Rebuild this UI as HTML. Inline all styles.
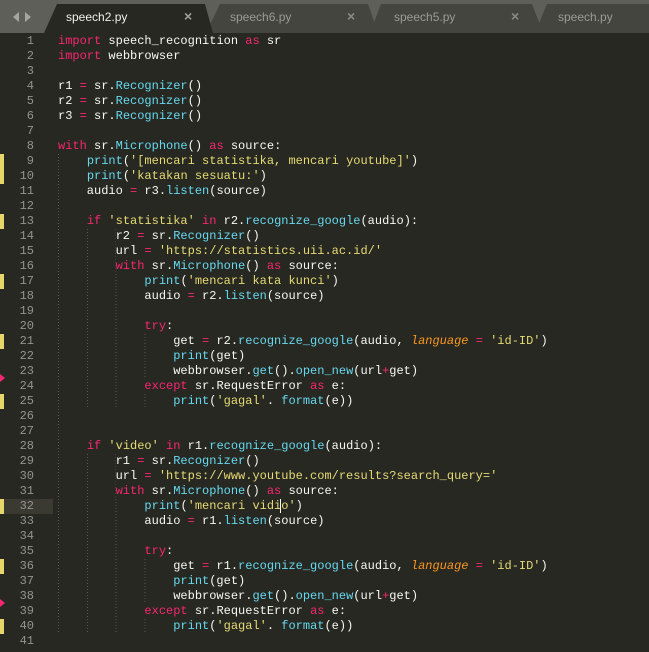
<!DOCTYPE html>
<html><head><meta charset="utf-8"><style>
body{margin:0;width:649px;height:652px;background:#272822;overflow:hidden;position:relative;font-family:"Liberation Mono",monospace;}
.tb{position:absolute;left:0;top:0;width:649px;height:33px;}
.tt{position:absolute;top:10px;font:12px "Liberation Sans",sans-serif;color:#9a9b95;}
.x{position:absolute;top:8px;font:bold 14px "Liberation Sans",sans-serif;color:#8a8b85;}
.l{position:absolute;left:0;width:649px;height:15px;line-height:15px;font-size:12px;color:#f8f8f2;white-space:pre;}
.n{position:absolute;left:0;width:34px;text-align:right;color:#93948e;}
.c{position:absolute;left:58px;}
.g{position:absolute;left:58px;top:0;height:15px;background:repeating-linear-gradient(to right,#55564f 0 1px,transparent 1px 28.8px);-webkit-mask-image:repeating-linear-gradient(to bottom,#000 0 1px,transparent 1px 3px);mask-image:repeating-linear-gradient(to bottom,#000 0 1px,transparent 1px 3px);}
.k{color:#f92672}.f{color:#66d9ef}.s{color:#e6db74}.p{color:#fd971f;font-style:italic}
.m{position:absolute;left:0;width:4px;height:15px;background:#e6d76a;}
.r{position:absolute;left:0;width:0;height:0;border-top:4px solid transparent;border-bottom:4px solid transparent;border-left:5px solid #f92672;}
</style></head><body>
<svg class="tb" width="649" height="33">
<rect width="649" height="33" fill="#5e5f59"/>
<polygon points="535,33 547,4 649,4 649,33" fill="#44453f"/>
<polygon points="370,33 381,4 532,4 543,33" fill="#44453f"/>
<polygon points="206,33 220,4 368,4 378,33" fill="#44453f"/>
<polygon points="44,33 57,4 205,4 213,33" fill="#272822"/>
<polygon points="13,17 19,12 19,22" fill="#a5a6a0"/>
<polygon points="31,17 25,12 25,22" fill="#a5a6a0"/>
</svg>
<div class="tt" style="left:66px;color:#f0f0ea">speech2.py</div><div class="x" style="left:184px;color:#a0a19b">×</div>
<div class="tt" style="left:230px">speech6.py</div><div class="x" style="left:347px">×</div>
<div class="tt" style="left:394px">speech5.py</div><div class="x" style="left:511px">×</div>
<div class="tt" style="left:558px">speech.py</div>
<div style="position:absolute;left:0;top:499px;width:53px;height:15px;background:#3b3a32"></div>
<div class="m" style="top:154px;height:30px"></div>
<div class="m" style="top:214px"></div>
<div class="m" style="top:274px"></div>
<div class="m" style="top:334px"></div>
<div class="m" style="top:394px"></div>
<div class="m" style="top:499px"></div>
<div class="m" style="top:559px"></div>
<div class="m" style="top:619px"></div>
<div class="r" style="top:374px"></div>
<div class="r" style="top:599px"></div>

<div class="l" style="top:34px"><span class="n">1</span><span class="c"><span class="k">import</span> speech_recognition <span class="k">as</span> sr</span></div>
<div class="l" style="top:49px"><span class="n">2</span><span class="c"><span class="k">import</span> webbrowser</span></div>
<div class="l" style="top:64px"><span class="n">3</span></div>
<div class="l" style="top:79px"><span class="n">4</span><span class="c">r1 <span class="k">=</span> sr.<span class="f">Recognizer</span>()</span></div>
<div class="l" style="top:94px"><span class="n">5</span><span class="c">r2 <span class="k">=</span> sr.<span class="f">Recognizer</span>()</span></div>
<div class="l" style="top:109px"><span class="n">6</span><span class="c">r3 <span class="k">=</span> sr.<span class="f">Recognizer</span>()</span></div>
<div class="l" style="top:124px"><span class="n">7</span></div>
<div class="l" style="top:139px"><span class="n">8</span><span class="c"><span class="k">with</span> sr.<span class="f">Microphone</span>() <span class="k">as</span> source:</span></div>
<div class="l" style="top:154px"><span class="n">9</span><div class="g" style="width:28.8px"></div><span class="c">    <span class="f">print</span>(<span class="s">'[mencari statistika, mencari youtube]'</span>)</span></div>
<div class="l" style="top:169px"><span class="n">10</span><div class="g" style="width:28.8px"></div><span class="c">    <span class="f">print</span>(<span class="s">'katakan sesuatu:'</span>)</span></div>
<div class="l" style="top:184px"><span class="n">11</span><div class="g" style="width:28.8px"></div><span class="c">    audio <span class="k">=</span> r3.<span class="f">listen</span>(source)</span></div>
<div class="l" style="top:199px"><span class="n">12</span><div class="g" style="width:28.8px"></div></div>
<div class="l" style="top:214px"><span class="n">13</span><div class="g" style="width:28.8px"></div><span class="c">    <span class="k">if</span> <span class="s">'statistika'</span> <span class="k">in</span> r2.<span class="f">recognize_google</span>(audio):</span></div>
<div class="l" style="top:229px"><span class="n">14</span><div class="g" style="width:57.6px"></div><span class="c">        r2 <span class="k">=</span> sr.<span class="f">Recognizer</span>()</span></div>
<div class="l" style="top:244px"><span class="n">15</span><div class="g" style="width:57.6px"></div><span class="c">        url <span class="k">=</span> <span class="s">'https://statistics.uii.ac.id/'</span></span></div>
<div class="l" style="top:259px"><span class="n">16</span><div class="g" style="width:57.6px"></div><span class="c">        <span class="k">with</span> sr.<span class="f">Microphone</span>() <span class="k">as</span> source:</span></div>
<div class="l" style="top:274px"><span class="n">17</span><div class="g" style="width:86.4px"></div><span class="c">            <span class="f">print</span>(<span class="s">'mencari kata kunci'</span>)</span></div>
<div class="l" style="top:289px"><span class="n">18</span><div class="g" style="width:86.4px"></div><span class="c">            audio <span class="k">=</span> r2.<span class="f">listen</span>(source)</span></div>
<div class="l" style="top:304px"><span class="n">19</span><div class="g" style="width:86.4px"></div></div>
<div class="l" style="top:319px"><span class="n">20</span><div class="g" style="width:86.4px"></div><span class="c">            <span class="k">try</span>:</span></div>
<div class="l" style="top:334px"><span class="n">21</span><div class="g" style="width:115.2px"></div><span class="c">                get <span class="k">=</span> r2.<span class="f">recognize_google</span>(audio, <span class="p">language</span> <span class="k">=</span> <span class="s">'id-ID'</span>)</span></div>
<div class="l" style="top:349px"><span class="n">22</span><div class="g" style="width:115.2px"></div><span class="c">                <span class="f">print</span>(get)</span></div>
<div class="l" style="top:364px"><span class="n">23</span><div class="g" style="width:115.2px"></div><span class="c">                webbrowser.<span class="f">get</span>().<span class="f">open_new</span>(url<span class="k">+</span>get)</span></div>
<div class="l" style="top:379px"><span class="n">24</span><div class="g" style="width:86.4px"></div><span class="c">            <span class="k">except</span> sr.RequestError <span class="k">as</span> e:</span></div>
<div class="l" style="top:394px"><span class="n">25</span><div class="g" style="width:115.2px"></div><span class="c">                <span class="f">print</span>(<span class="s">'gagal'</span>. <span class="f">format</span>(e))</span></div>
<div class="l" style="top:409px"><span class="n">26</span><div class="g" style="width:28.8px"></div></div>
<div class="l" style="top:424px"><span class="n">27</span><div class="g" style="width:28.8px"></div></div>
<div class="l" style="top:439px"><span class="n">28</span><div class="g" style="width:28.8px"></div><span class="c">    <span class="k">if</span> <span class="s">'video'</span> <span class="k">in</span> r1.<span class="f">recognize_google</span>(audio):</span></div>
<div class="l" style="top:454px"><span class="n">29</span><div class="g" style="width:57.6px"></div><span class="c">        r1 <span class="k">=</span> sr.<span class="f">Recognizer</span>()</span></div>
<div class="l" style="top:469px"><span class="n">30</span><div class="g" style="width:57.6px"></div><span class="c">        url <span class="k">=</span> <span class="s">'https://www.youtube.com/results?search_query='</span></span></div>
<div class="l" style="top:484px"><span class="n">31</span><div class="g" style="width:57.6px"></div><span class="c">        <span class="k">with</span> sr.<span class="f">Microphone</span>() <span class="k">as</span> source:</span></div>
<div class="l" style="top:499px"><span class="n">32</span><div class="g" style="width:86.4px"></div><span class="c">            <span class="f">print</span>(<span class="s">'mencari vidi<span style="border-left:1px solid #f8f8f2;margin-left:-1px"></span>o'</span>)</span></div>
<div class="l" style="top:514px"><span class="n">33</span><div class="g" style="width:86.4px"></div><span class="c">            audio <span class="k">=</span> r1.<span class="f">listen</span>(source)</span></div>
<div class="l" style="top:529px"><span class="n">34</span><div class="g" style="width:86.4px"></div></div>
<div class="l" style="top:544px"><span class="n">35</span><div class="g" style="width:86.4px"></div><span class="c">            <span class="k">try</span>:</span></div>
<div class="l" style="top:559px"><span class="n">36</span><div class="g" style="width:115.2px"></div><span class="c">                get <span class="k">=</span> r1.<span class="f">recognize_google</span>(audio, <span class="p">language</span> <span class="k">=</span> <span class="s">'id-ID'</span>)</span></div>
<div class="l" style="top:574px"><span class="n">37</span><div class="g" style="width:115.2px"></div><span class="c">                <span class="f">print</span>(get)</span></div>
<div class="l" style="top:589px"><span class="n">38</span><div class="g" style="width:115.2px"></div><span class="c">                webbrowser.<span class="f">get</span>().<span class="f">open_new</span>(url<span class="k">+</span>get)</span></div>
<div class="l" style="top:604px"><span class="n">39</span><div class="g" style="width:86.4px"></div><span class="c">            <span class="k">except</span> sr.RequestError <span class="k">as</span> e:</span></div>
<div class="l" style="top:619px"><span class="n">40</span><div class="g" style="width:115.2px"></div><span class="c">                <span class="f">print</span>(<span class="s">'gagal'</span>. <span class="f">format</span>(e))</span></div>
<div class="l" style="top:634px"><span class="n">41</span></div>
</body></html>
